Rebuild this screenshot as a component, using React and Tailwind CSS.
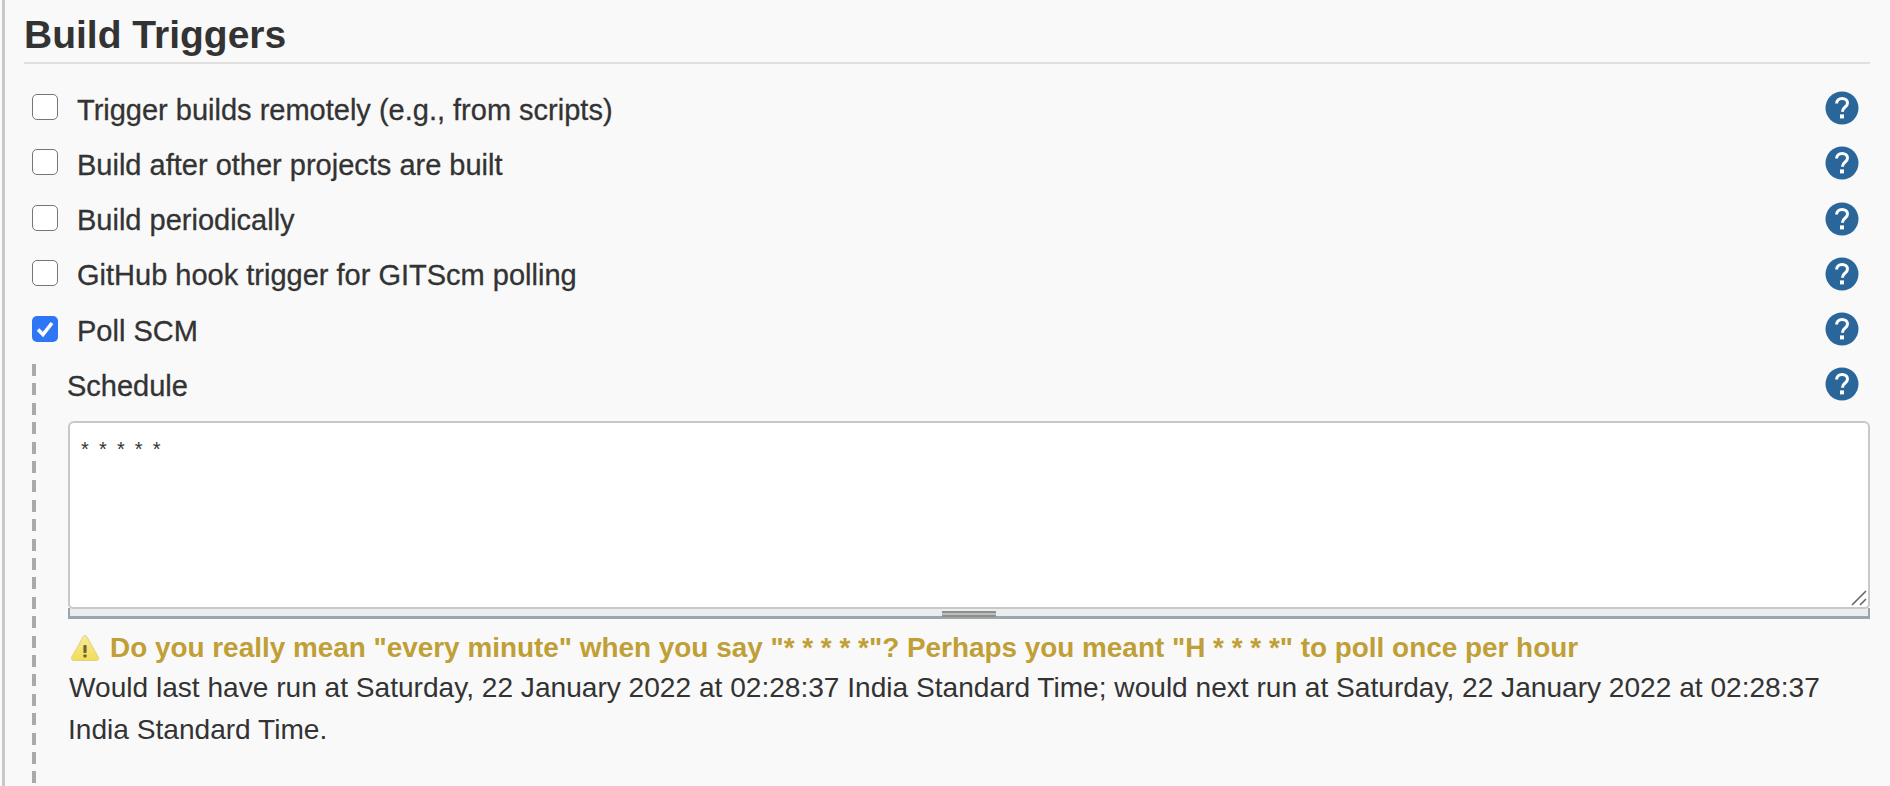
import React from "react";

const triggers = [
  { label: "Trigger builds remotely (e.g., from scripts)" },
  { label: "Build after other projects are built" },
  { label: "Build periodically" },
  { label: "GitHub hook trigger for GITScm polling" },
  { label: "Poll SCM", checked: true },
];

const HelpIcon = () => (
  <svg viewBox="0 0 34 34" className="w-[34px] h-[34px] shrink-0 mb-[3px]">
    <circle cx="17" cy="17" r="16.5" fill="#2a6699" />
    <path
      d="M11.6 12.6c0-3.2 2.4-5.2 5.5-5.2s5.4 1.9 5.4 4.6c0 2-1 3.1-2.6 4.3-1.5 1.1-2.3 1.9-2.3 3.8v.6"
      fill="none"
      stroke="#fff"
      strokeWidth="3"
    />
    <rect x="15" y="23.4" width="4" height="4" fill="#fff" />
  </svg>
);

const Checkbox = ({ checked }) =>
  checked ? (
    <span className="w-[26px] h-[26px] rounded-[5px] bg-[#2f76f6] flex items-center justify-center shrink-0 mb-[3px]">
      <svg viewBox="0 0 26 26" className="w-[26px] h-[26px]">
        <path d="M6 13.5l5 5 9-11.5" fill="none" stroke="#fff" strokeWidth="3.6" />
      </svg>
    </span>
  ) : (
    <span className="w-[26px] h-[26px] rounded-[5px] border-[1.5px] border-[#767676] bg-white shrink-0 mb-[5px]" />
  );

const WarningIcon = () => (
  <svg viewBox="0 0 30 28" className="w-[30px] h-[28px] shrink-0">
    <defs>
      <linearGradient id="warn" x1="0" y1="0" x2="0" y2="1">
        <stop offset="0" stopColor="#f6ec9a" />
        <stop offset="1" stopColor="#f2dc58" />
      </linearGradient>
    </defs>
    <path
      d="M15 1.5c.8 0 1.4.5 1.9 1.3l11.4 20.4c.8 1.5 0 3.3-1.8 3.3H3.5c-1.8 0-2.6-1.8-1.8-3.3L13.1 2.8c.5-.8 1.1-1.3 1.9-1.3z"
      fill="url(#warn)"
      stroke="#e4d27a"
    />
    <rect x="13.4" y="11" width="3.2" height="8" rx="1" fill="#6b6436" />
    <rect x="13.4" y="20.4" width="3.2" height="3" rx="0.8" fill="#6b6436" />
  </svg>
);

export default function App() {
  return (
    <div className="h-[786px] overflow-hidden bg-[#f9f9f9] font-['Liberation_Sans',Arial,sans-serif] text-[#333] pl-[2px]">
      <div className="h-full border-l-[3px] border-[#c8c8c8] pl-[19px] pr-[20px]">
        <h1 className="h-[64px] pt-[14px] text-[39px] leading-[41px] font-bold border-b-2 border-[#e0e0e0]">
          Build Triggers
        </h1>

        <div className="pt-[18px]">
          {triggers.map((t) => (
            <div key={t.label} className="h-[55.25px] flex items-center pl-[8px] pr-[11px]">
              <Checkbox checked={t.checked} />
              <span className="ml-[19px] text-[29px] leading-[34px] flex-1 [-webkit-text-stroke:0.3px_#333]">{t.label}</span>
              <HelpIcon />
            </div>
          ))}
        </div>

        <div className="flex">
          <div className="w-[4px] ml-[8px] mt-[6px] h-[450px] bg-[repeating-linear-gradient(to_bottom,#aaaaaa_0,#aaaaaa_12px,transparent_12px,transparent_19.4px)]" />
          <div className="flex-1 ml-[32px]">
            <div className="h-[55px] flex items-center pr-[11px]">
              <span className="flex-1 text-[29px] leading-[34px] -ml-[1px] [-webkit-text-stroke:0.3px_#333]">Schedule</span>
              <HelpIcon />
            </div>

            <div className="mt-[8px]">
              <div className="relative">
                <textarea
                  readOnly
                  defaultValue="* * * * *"
                  className="block w-full h-[188px] resize-none bg-white border-2 border-[#c8c8c8] rounded-t-[6px] rounded-b-[5px] pt-[14px] px-[11px] text-[20px] leading-[24px] tracking-[2.3px] outline-none"
                />
                <svg viewBox="0 0 16 16" className="absolute right-[3px] bottom-[3px] w-[16px] h-[16px]">
                  <path d="M1 15L15 1M9 15l6-6" stroke="#666" strokeWidth="1.6" fill="none" />
                </svg>
              </div>
              <div className="h-[11px] bg-[#e9edf0] border-x-2 border-b-[3px] border-[#9aa5ad] -mt-[1px] flex justify-center items-start">
                <div className="w-[54px] h-[6px] mt-[3px] border-y-2 border-[#8d8f8a] bg-[#bdbdbd]" />
              </div>
            </div>

            <div className="mt-[14px] flex items-center h-[30px] pl-[2px] gap-[10px]">
              <WarningIcon />
              <span className="text-[27.9px] leading-[30px] font-bold text-[#bf9f36]">
                Do you really mean "every minute" when you say "* * * * *"? Perhaps you meant "H * * * *" to poll once per hour
              </span>
            </div>
            <p className="text-[28.1px] leading-[42px] mt-[4px] w-[1800px]">
              <span className="pl-[1px]">Would last have run at Saturday, 22 January 2022 at 02:28:37 India Standard Time; would next run at Saturday, 22 January 2022 at 02:28:37 India Standard Time.</span>
            </p>
          </div>
        </div>
      </div>
    </div>
  );
}
